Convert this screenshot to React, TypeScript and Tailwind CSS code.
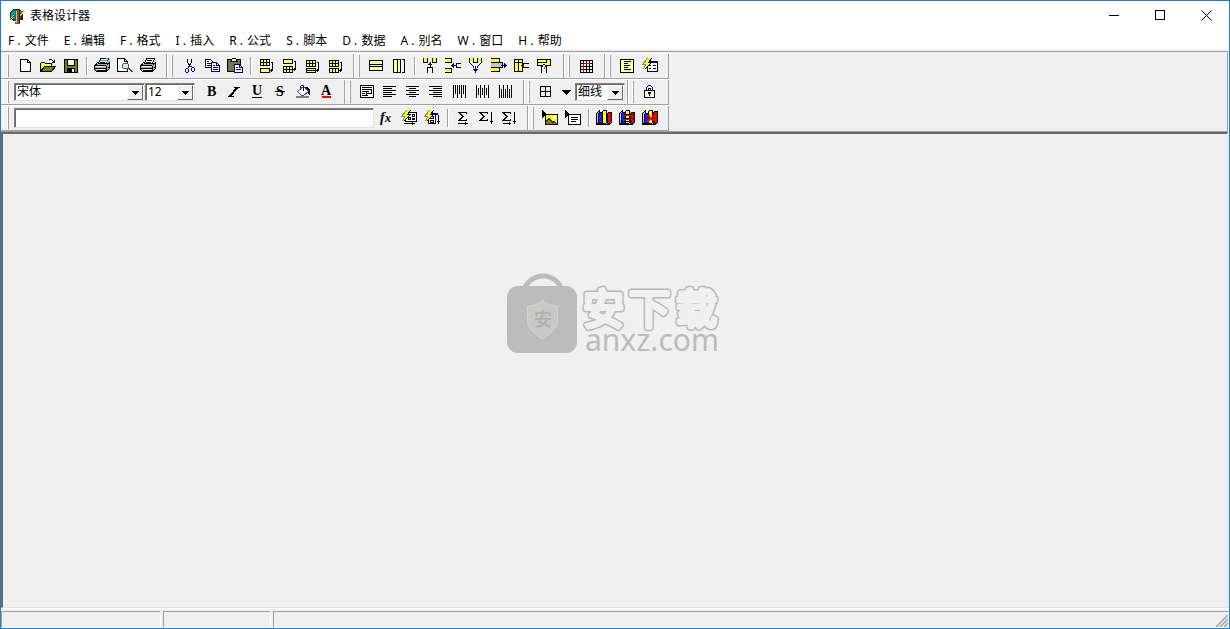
import type { ReactNode } from "react";

const YELLOW = "#ffff4c";
const PALE = "#ffff9c";
const NAVY = "#000080";

function Icon({ children }: { children: ReactNode }) {
  return (
    <svg
      viewBox="0 0 23 24"
      className="h-6 w-[23px] shrink-0"
      fill="none"
      stroke="#000"
      shapeRendering="crispEdges"
      aria-hidden="true"
    >
      {children}
    </svg>
  );
}

function Tool({ label, children }: { label: string; children: ReactNode }) {
  return (
    <button type="button" title={label} aria-label={label} className="flex h-6 w-[23px] shrink-0">
      <Icon>{children}</Icon>
    </button>
  );
}

function Sep() {
  return (
    <div className="flex h-6 w-2 shrink-0 items-center justify-center">
      <div className="h-[18px] w-0.5 border-l border-r border-l-[#a0a0a0] border-r-white" />
    </div>
  );
}

function Bar({ label, tight, children }: { label: string; tight?: boolean; children: ReactNode }) {
  return (
    <div
      role="toolbar"
      aria-label={label}
      className={
        "flex h-6 shrink-0 items-center border-r border-l border-r-[#a0a0a0] border-l-white pl-[3px] " +
        (tight ? "pr-0.5" : "pr-1.5")
      }
    >
      <div className="mr-[5px] h-[22px] w-0.5 border-l border-r border-l-white border-r-[#a0a0a0]" />
      {children}
    </div>
  );
}

function Row({ children }: { children: ReactNode }) {
  return (
    <div className="flex w-fit border-t border-b border-t-white border-b-[#a0a0a0] pl-0.5">{children}</div>
  );
}

const sunken =
  "border border-t-[#808080] border-l-[#808080] border-r-[#e3e3e3] border-b-[#e3e3e3] bg-white shadow-[inset_1px_1px_0_#696969]";

function Combo({ label, options, width }: { label: string; options: string[]; width: string }) {
  return (
    <div className={`relative h-[18px] shrink-0 ${sunken} ${width}`}>
      <select
        aria-label={label}
        className="block h-4 w-full appearance-none bg-transparent pl-0.5 text-xs leading-4 text-black outline-none"
      >
        {options.map((o) => (
          <option key={o}>{o}</option>
        ))}
      </select>
      <span className="pointer-events-none absolute top-px right-px flex h-[15px] w-4 items-center justify-center border border-t-white border-l-white border-r-[#696969] border-b-[#696969] bg-[#f0f0f0]">
        <svg viewBox="0 0 7 4" className="h-1 w-[7px]" shapeRendering="crispEdges" aria-hidden="true">
          <path d="M0 0h7v1h-7zM1 1h5v1h-5zM2 2h3v1h-3zM3 3h1v1h-1z" />
        </svg>
      </span>
    </div>
  );
}

function Printer() {
  return (
    <>
      <path d="M7.5 9.5L9.5 4.5H17.5L15.5 9.5Z" fill="#fff" />
      <path d="M10 6.5h5M9 8.5h5" />
      <path d="M3.5 11.5L6.5 8.5M15.5 9.5H18.5V14.5L15.5 17.5H5.5L3.5 15.5V11.5L6.5 9.5" fill="#a8a8a8" />
      <path d="M4 11.5H15M4 14.5H15.5M15.5 11.5V17M15.5 11.5L18.5 8.5M6 16.5h9M16.5 13.5h2" />
      <path d="M5 12.5h9M6 15.5h8" stroke="#fff" />
      <path d="M11 12.5h2" stroke="#ff0" />
    </>
  );
}

function Bolt() {
  return (
    <>
      <path d="M8 4h5l-3 4h3L5 15l2-5H4z" fill="#ff0" stroke="none" />
      <path d="M8.5 4.5L3.5 10.5H6.5L4.5 15.5" stroke="#808080" />
      <path d="M12.5 4.5L9.5 8.5H12.5L5.5 15.5" />
    </>
  );
}

function Cells({ y, rows }: { y: number; rows: number }) {
  return (
    <>
      <rect x="5.5" y={y + 0.5} width="9" height={rows === 2 ? 6 : 4} fill={YELLOW} />
      {rows === 2 && <path d={`M5 ${y + 3.5}h10`} />}
      {rows === 2 && <path d={`M8.5 ${y}v7M11.5 ${y}v7`} />}
    </>
  );
}

function RowArrow({ y }: { y: number }) {
  return <path d={`M15.5 ${y + 0.5}h2v8M15 ${y + 8.5}h3M16.5 ${y + 7}v3`} />;
}

function Sigma({ x }: { x: number }) {
  return (
    <path
      d={`M${x + 8.5} 8V6.5H${x + 0.5}L${x + 4.5} 10.5L${x + 0.5} 14.5H${x + 8.5}V13M${x + 1.5} 6.5L${x + 5.5} 10.5L${x + 1.5} 14.5`}
    />
  );
}

function ChartBase() {
  return (
    <>
      <path d="M3.5 7.5L6.5 4.5V15.5L3.5 18.5Z" fill="#c0c0c0" />
      <path d="M3 18.5H16L18.5 16" />
      <path d="M4 9.5h2M4 12.5h2" stroke="#fff" />
    </>
  );
}

function Column({ x, y, color }: { x: number; y: number; color: string }) {
  return (
    <>
      <path d={`M${x + 0.5} ${y + 1.5}l1 -1h3V16.5l-1 1h-3z`} fill={color} />
      <path d={`M${x + 0.5} ${y + 2}V17`} />
    </>
  );
}

const menus = [
  ["F", "文件"],
  ["E", "编辑"],
  ["F", "格式"],
  ["I", "插入"],
  ["R", "公式"],
  ["S", "脚本"],
  ["D", "数据"],
  ["A", "别名"],
  ["W", "窗口"],
  ["H", "帮助"],
];

function TitleBar() {
  return (
    <header className="flex h-[29px] shrink-0 items-center bg-white pl-2">
      <svg viewBox="0 0 16 16" className="h-4 w-4" shapeRendering="crispEdges" aria-hidden="true">
        <circle cx="7.5" cy="7" r="6" fill="#087c7c" stroke="#033" />
        <path d="M3 4h3v2H4v4H2V6zM10 3h3v3h-2z" fill="#0aa" />
        <path d="M0 11l3-3 2-1 1 2-3 2zM10 6l3-3 2-1-1 4-3 2z" fill="#d8d81c" />
        <path d="M1 12l3-3 2-1M10 7l4-4" stroke="#440" fill="none" />
        <path d="M6 3h5v2h-1v9h1v2H6v-2h1V5H6z" fill="#8a4b28" />
        <path d="M7 3h1v12H7z" fill="#e0bc96" />
        <path d="M10 4h1v11h-1zM12 8h2v4h-2z" fill="#301808" />
      </svg>
      <h1 className="ml-[5px] flex-1 text-xs text-black">表格设计器</h1>
      <div className="flex h-full">
        <button type="button" aria-label="最小化" className="flex w-[46px] items-center justify-center">
          <svg viewBox="0 0 11 11" className="h-[11px] w-[11px]" stroke="#000" shapeRendering="crispEdges">
            <path d="M0 5.5h10" />
          </svg>
        </button>
        <button type="button" aria-label="最大化" className="flex w-[46px] items-center justify-center">
          <svg viewBox="0 0 11 11" className="h-[11px] w-[11px]" stroke="#000" fill="none" shapeRendering="crispEdges">
            <rect x="0.5" y="0.5" width="9" height="9" />
          </svg>
        </button>
        <button type="button" aria-label="关闭" className="flex w-[46px] items-center justify-center">
          <svg viewBox="0 0 11 11" className="h-[11px] w-[11px]" stroke="#000">
            <path d="M0.5 0.5l10 10M10.5 0.5l-10 10" />
          </svg>
        </button>
      </div>
    </header>
  );
}

function StandardRow() {
  return (
    <Row>
      <Bar label="标准">
        <Tool label="新建">
          <path d="M6.5 5.5H13.5L16.5 8.5V17.5H6.5Z" fill="#fff" />
          <path d="M13.5 5.5v3h3" />
        </Tool>
        <Tool label="打开">
          <path d="M3.5 17.5V9.5L4.5 8.5H7.5L8.5 9.5H14.5V12.5" fill={YELLOW} />
          <path d="M3.5 17.5L7.5 12.5H18.5L14.5 17.5Z" fill="#808000" />
          <path d="M11.5 6.5L12.5 5.5H14.5L17.5 8.5M17.5 6v3M15 8.5h3" />
        </Tool>
        <Tool label="保存">
          <rect x="4.5" y="5.5" width="13" height="13" fill="#808000" />
          <rect x="7.5" y="5.5" width="7" height="6" fill="#f0f0f0" />
          <rect x="7" y="14" width="8" height="5" fill="#000" stroke="none" />
          <rect x="12" y="15" width="2" height="3" fill="#f0f0f0" stroke="none" />
        </Tool>
        <Sep />
        <Tool label="打印设置">
          <Printer />
          <path d="M9 6.5h7M15 4.5h2M18 5.5h1M16 7.5h3" stroke="#00c8d8" />
        </Tool>
        <Tool label="打印预览">
          <path d="M3.5 4.5H10.5L13.5 7.5V17.5H3.5Z" fill="#fff" />
          <path d="M10.5 4.5v3h3" />
          <circle cx="11.5" cy="12" r="3" fill="#c8f0f0" stroke="#555" />
          <path d="M14 14l4.5 4.5M15 14l4 4" stroke="#444" />
        </Tool>
        <Tool label="打印">
          <Printer />
        </Tool>
      </Bar>
      <Bar label="编辑">
        <Tool label="剪切">
          <path d="M9.5 5v3l3 5M13.5 5v3l-3 5M10 10.5h3M11 11.5h1" />
          <path d="M11.5 12l-1 2M12.5 12l1 1M7.5 15.5l1-1h1l1 1v2l-1 1h-1l-1-1zM13.5 14.5l1-1h1l1 1v2l-1 1h-1l-1-1z" stroke={NAVY} />
        </Tool>
        <Tool label="复制">
          <path d="M4.5 5.5h5l2 2v6h-7z" fill="#fff" />
          <path d="M6 7.5h2M6 9.5h4M6 11.5h4" />
          <path d="M10.5 8.5h5l3 3v6h-8z" fill="#fff" stroke={NAVY} />
          <path d="M12 11.5h2M12 13.5h5M12 15.5h5M15.5 8.5v3h3" stroke={NAVY} />
        </Tool>
        <Tool label="粘贴">
          <rect x="3.5" y="5.5" width="13" height="12" rx="1" fill="#77774a" />
          <path d="M6.5 7.5L8.5 4.5H11.5L13.5 7.5Z" fill="#ffff80" />
          <path d="M10.5 10.5h5l3 3v5h-8z" fill="#fff" stroke={NAVY} />
          <path d="M12 13.5h2M12 15.5h5M15.5 10.5v3h3" stroke={NAVY} />
        </Tool>
        <Sep />
        <Tool label="插入行">
          <Cells y={5} rows={2} />
          <Cells y={14} rows={1} />
          <RowArrow y={8} />
        </Tool>
        <Tool label="追加行">
          <Cells y={5} rows={1} />
          <Cells y={12} rows={2} />
          <RowArrow y={7} />
        </Tool>
        <Tool label="插入列">
          <Cells y={6} rows={2} />
          <Cells y={14} rows={1} />
          <path d="M5 16.5h10" />
          <RowArrow y={8} />
        </Tool>
        <Tool label="追加列">
          <Cells y={6} rows={2} />
          <Cells y={14} rows={1} />
          <path d="M8.5 14v4M11.5 14v4" />
          <RowArrow y={8} />
        </Tool>
      </Bar>
      <Bar label="单元格">
        <Tool label="横向拆分">
          <rect x="4.5" y="6.5" width="13" height="10" fill={PALE} />
          <path d="M4 10.5h14M4 12.5h14" />
          <path d="M5 11.5h12" stroke="#f0f0f0" />
        </Tool>
        <Tool label="纵向拆分">
          <rect x="5.5" y="5.5" width="7" height="13" fill={PALE} />
          <path d="M9.5 5v14M14 5.5h2.5v13H14" />
        </Tool>
        <Sep />
        <Tool label="向上合并">
          <path d="M4 4h4v4H4zM14 4h4v4h-4z" fill="#ff0" stroke="none" />
          <path d="M4.5 4v4.5h4V4M13.5 4v4.5h4V4M8.5 19v-5.5h5V19" />
          <path d="M11 8v5M9 10.5h4M10 9.5h2" stroke={NAVY} />
        </Tool>
        <Tool label="向左合并">
          <path d="M3 5h6v3H3zM3 15h6v3H3z" fill="#ff0" stroke="none" />
          <path d="M3 4.5h6.5v4H3M3 14.5h6.5v4H3M19 9.5h-4.5v4h4.5" />
          <path d="M9 11.5h5M11.5 9v5M10.5 10v3" stroke={NAVY} />
        </Tool>
        <Tool label="向下合并">
          <path d="M4 4h4v4H4zM13 4h4v4h-4z" fill="#ff0" stroke="none" />
          <path d="M4.5 4v4.5l4 4v1.5M8.5 4v4.5h4V4M16.5 4v4.5l-4 4v1.5" />
          <path d="M10.5 12v7M8 15.5h5M9 16.5h3" stroke={NAVY} />
        </Tool>
        <Tool label="向右合并">
          <path d="M3 5h8v3H3zM3 14h8v3H3z" fill="#ff0" stroke="none" />
          <path d="M3 9h11v4H3z" fill="#c4c4c4" stroke="none" />
          <path d="M3 4.5h8.5v4H3M3 8.5h11.5v5H3M3 17.5h8.5v-4" />
          <path d="M13 11.5h6M16.5 9v5M17.5 10v3" stroke={NAVY} />
        </Tool>
        <Tool label="删除列">
          <rect x="3.5" y="5.5" width="8" height="12" fill={YELLOW} />
          <path d="M3 8.5h9M7.5 5v13" />
          <path d="M18 9.5h-5l-2 2 2 2h5" fill="#f0f0f0" />
          <path d="M12 11.5h1" stroke="#e02020" />
        </Tool>
        <Tool label="删除行">
          <rect x="3.5" y="5.5" width="13" height="6" fill={YELLOW} />
          <path d="M3 8.5h9.5V5" />
          <path d="M7.5 19v-6l2.5-3 2.5 3v6" fill="#f0f0f0" />
          <path d="M10.5 13v2" stroke="#e02020" />
        </Tool>
      </Bar>
      <Bar label="表格">
        <Tool label="表格线">
          <path d="M5.5 6.5h12v12h-12zM5 9.5h13M5 12.5h13M5 15.5h13M8.5 6v13M11.5 6v13M14.5 6v13" />
          <path d="M8.5 18V9.5H16" stroke="#e00000" />
        </Tool>
      </Bar>
      <Bar label="属性">
        <Tool label="表格属性">
          <rect x="4.5" y="5.5" width="13" height="13" fill={PALE} />
          <path d="M8 7.5h7M8 9.5h4M8 11.5h6M8 13.5h4M8 15.5h7" />
        </Tool>
        <Tool label="快速属性">
          <rect x="8.5" y="7.5" width="10" height="10" fill="#fff" />
          <path d="M9 7.5h10" stroke={NAVY} strokeWidth="2" />
          <path d="M10 11.5h2M14 11.5h3M10 14.5h2M14 14.5h3" stroke={NAVY} />
          <Bolt />
        </Tool>
      </Bar>
    </Row>
  );
}

function linesH(kind: "left" | "center" | "right") {
  if (kind === "left") return "M4 6.5h13M4 8.5h9M4 10.5h13M4 12.5h9M4 14.5h13M4 16.5h9";
  if (kind === "center") return "M4 6.5h13M7 8.5h7M4 10.5h13M7 12.5h7M4 14.5h13M7 16.5h7";
  return "M4 6.5h13M8 8.5h9M4 10.5h13M8 12.5h9M4 14.5h13M8 16.5h9";
}

function linesV(kind: "top" | "middle" | "bottom") {
  if (kind === "top") return "M5.5 5v13M7.5 5v9M9.5 5v13M11.5 5v9M13.5 5v13M15.5 5v9M17.5 5v13";
  if (kind === "middle") return "M5.5 5v13M7.5 8v7M9.5 5v13M11.5 8v7M13.5 5v13M15.5 8v7M17.5 5v13";
  return "M5.5 5v13M7.5 9v9M9.5 5v13M11.5 9v9M13.5 5v13M15.5 9v9M17.5 5v13";
}

const glyph = "fill-black stroke-none font-['Liberation_Serif',serif] font-bold text-[14px]";

function FormatRow() {
  return (
    <Row>
      <Bar label="字体">
        <Combo label="字体" options={["宋体", "黑体", "楷体"]} width="w-[131px]" />
        <Combo label="字号" options={["12", "14", "16"]} width="w-[50px]" />
        <div className="flex pl-[5px]">
          <Tool label="加粗">
            <text x="7" y="16" className={glyph}>B</text>
          </Tool>
          <Tool label="倾斜">
            <path d="M11 7.5h6M5 16.5h6" />
            <path d="M7 16L14 8" strokeWidth="2" />
          </Tool>
          <Tool label="下划线">
            <text x="6" y="15" className={glyph}>U</text>
            <path d="M6 17.5h10" />
          </Tool>
          <Tool label="删除线">
            <text x="7" y="16" className={glyph}>S</text>
            <path d="M6 11.5h10" />
          </Tool>
          <Tool label="填充颜色">
            <path d="M5.5 11.5L11.5 6.5L16.5 11.5L11.5 15.5H9.5Z" fill="#fff" stroke="#555" />
            <path d="M8.5 8V6.5L9.5 5.5H11.5V11" stroke={NAVY} />
            <path d="M12 7h3l3 3v6l-2-2v-3z" fill={NAVY} stroke="none" />
            <rect x="4" y="16" width="13" height="2" fill="#808080" stroke="none" />
          </Tool>
          <Tool label="字体颜色">
            <text x="6" y="15" className={glyph}>A</text>
            <rect x="7" y="16" width="9" height="2" fill="#f00" stroke="none" />
          </Tool>
        </div>
      </Bar>
      <Bar label="对齐">
        <Tool label="自动换行">
          <rect x="4.5" y="5.5" width="13" height="12" fill="#fff" />
          <path d="M6 7.5h10M6 9.5h9.5v4H11M6 11.5h7M6 13.5h3M6 15.5h6M10.5 12v3" />
        </Tool>
        <Tool label="左对齐"><path d={linesH("left")} /></Tool>
        <Tool label="水平居中"><path d={linesH("center")} /></Tool>
        <Tool label="右对齐"><path d={linesH("right")} /></Tool>
        <Tool label="顶端对齐"><path d={linesV("top")} /></Tool>
        <Tool label="垂直居中"><path d={linesV("middle")} /></Tool>
        <Tool label="底端对齐"><path d={linesV("bottom")} /></Tool>
      </Bar>
      <Bar label="边框" tight>
        <Tool label="边框">
          <path d="M5.5 6.5h10v10h-10zM5 11.5h11M10.5 6v11" />
        </Tool>
        <button type="button" aria-label="边框选项" className="flex h-6 w-[17px] items-center justify-center">
          <svg viewBox="0 0 9 5" className="h-[5px] w-[9px]" shapeRendering="crispEdges" aria-hidden="true">
            <path d="M0 0h9v1h-9zM1 1h7v1h-7zM2 2h5v1h-5zM3 3h3v1h-3zM4 4h1v1h-1z" />
          </svg>
        </button>
        <Combo label="线型" options={["细线", "粗线"]} width="w-[50px]" />
      </Bar>
      <Bar label="保护">
        <Tool label="锁定">
          <path d="M7.5 11V7.5L9.5 5.5H11.5L13.5 7.5V11M9.5 11V8.5h2V11" stroke={NAVY} />
          <rect x="5.5" y="10.5" width="10" height="7" fill={PALE} stroke={NAVY} />
          <path d="M9 12h3v2h-1v2h-1v-2H9z" fill={NAVY} stroke="none" />
        </Tool>
      </Bar>
    </Row>
  );
}

function FormulaRow() {
  return (
    <Row>
      <Bar label="公式">
        <input type="text" aria-label="公式" className={`mr-px h-5 w-[360px] px-1 text-xs outline-none ${sunken}`} />
        <Tool label="函数">
          <text x="5" y="16" className="fill-black stroke-none font-['Liberation_Serif',serif] text-[14px] font-bold italic">f</text>
          <text x="10" y="16" className="fill-black stroke-none font-['Liberation_Serif',serif] text-[12px] font-bold italic">x</text>
        </Tool>
        <Tool label="行公式">
          <rect x="7.5" y="6.5" width="11" height="9" fill="#fff" />
          <path d="M10.5 11.5h2v2h-2zM14.5 8.5h2v2h-2zM14.5 12.5h2v1h-2zM6 17.5h11M14.5 16v3" />
          <Bolt />
        </Tool>
        <Tool label="列公式">
          <path d="M7.5 17.5V7.5h7v10z" fill="#fff" />
          <path d="M8 7.5h9" stroke={NAVY} strokeWidth="2" />
          <path d="M9.5 10.5h3v2h-3zM9.5 14.5h3v2h-3zM17.5 9v9M16 15.5h3" />
          <Bolt />
        </Tool>
        <Sep />
        <Tool label="行求和">
          <Sigma x={6} />
          <path d="M6 17.5h10M13.5 16v3" />
        </Tool>
        <Tool label="列求和">
          <Sigma x={4} />
          <path d="M16.5 6v12M15 15.5h3" />
        </Tool>
        <Tool label="行列求和">
          <Sigma x={4} />
          <path d="M16.5 6v12M15 15.5h3M5 17.5h8M11.5 16v3" />
        </Tool>
      </Bar>
      <Bar label="对象">
        <Tool label="插入图片">
          <path d="M3 4l5 4-5 4z" fill="#000" stroke="none" />
          <rect x="6.5" y="8.5" width="12" height="10" fill="#ff0" />
          <path d="M7 18v-2l3-3 3 3 2-1 3 2v1z" fill="#808000" stroke="none" />
          <path d="M14 10.5h3M14 12.5h3M15.5 10v3" stroke="#fff" />
          <path d="M7 15.5l3-3 4 4 1-1 3 2" stroke="#333" />
        </Tool>
        <Tool label="插入文本">
          <path d="M3 4l5 4-5 4z" fill="#000" stroke="none" />
          <rect x="6.5" y="8.5" width="12" height="10" fill="#fff" />
          <path d="M9 11.5h7M9 13.5h7M9 15.5h5" />
        </Tool>
        <Sep />
        <Tool label="柱形图">
          <ChartBase />
          <Column x={5} y={6} color="#1020ff" />
          <Column x={9} y={4} color="#ff0" />
          <Column x={14} y={6} color="#f00000" />
        </Tool>
        <Tool label="条形图">
          <ChartBase />
          <Column x={5} y={6} color="#1020ff" />
          <Column x={9} y={4} color="#ff0" />
          <Column x={14} y={6} color="#f00000" />
          <path d="M8 8.5h10M8 12.5h10M8 15.5h8" />
          <path d="M9 9.5h8M9 13.5h6" stroke="#f00000" />
        </Tool>
        <Tool label="折线图">
          <ChartBase />
          <Column x={5} y={7} color="#1020ff" />
          <Column x={9} y={4} color="#ff0" />
          <Column x={14} y={5} color="#f00000" />
          <path d="M9 9l3 4 4-5M8 16l4-4 4 3" stroke="#f00000" strokeWidth="2" />
        </Tool>
      </Bar>
    </Row>
  );
}

function Watermark() {
  return (
    <svg viewBox="0 0 216 96" className="h-24 w-[216px] shrink-0" role="img" aria-label="安下载 anxz.com">
      <path d="M17 19a19.5 19.5 0 0 1 38 0" fill="none" stroke="#bcbcbc" strokeWidth="5" />
      <rect x="0" y="14" width="70" height="67" rx="11" fill="#bcbcbc" />
      <path d="M35.5 28.5c5 4 10 5.5 15 5.5v14c0 9-8 14.5-15 19c-7-4.5-15-10-15-19V34c5 0 10-1.5 15-5.5z" fill="#c8c8c6" stroke="#d4d4d2" />
      <text x="36" y="54" textAnchor="middle" className="fill-[#b2b2b2] text-[18px] font-bold">安</text>
      <g stroke="#b9b9b9" strokeWidth="7" fill="#b9b9b9" strokeLinejoin="round">
        <text id="brand" x="76 122 169" y="52" className="text-[41px]">安下载</text>
      </g>
      <use href="#brand" stroke="#f0f0f0" fill="#f0f0f0" strokeWidth="4" strokeLinejoin="round" />
      <text x="78" y="79" className="fill-[#bcbcbc] font-['Noto_Sans',sans-serif] text-[30px]">anxz.com</text>
    </svg>
  );
}

const panel = "border border-t-[#a0a0a0] border-l-[#a0a0a0] border-r-white border-b-white";

export default function App() {
  return (
    <div className="flex h-screen flex-col overflow-hidden border border-[#1a82d6] bg-[#f0f0f0] font-['Noto_Sans','Noto_Sans_CJK_SC',sans-serif] text-black">
      <TitleBar />
      <nav aria-label="主菜单" className="flex h-[19px] shrink-0 items-center gap-[15px] bg-white pt-[3px] pl-[7px]">
        {menus.map(([key, name]) => (
          <button key={name} type="button" className="flex items-center text-xs leading-4 whitespace-pre">
            <span>{key} .</span>
            <span className="pl-px">{" "}{name}</span>
          </button>
        ))}
      </nav>
      <div className="mt-0.5 mr-px shrink-0 border-t border-r border-b border-[#a0a0a0] pt-px">
        <div className="flex flex-col">
          <StandardRow />
          <FormatRow />
          <FormulaRow />
        </div>
      </div>
      <main className="mr-px flex min-h-0 flex-1 justify-center border-t-2 border-r border-b border-l-2 border-t-[#696969] border-r-[#e3e3e3] border-b-[#e3e3e3] border-l-[#696969] pt-[138px]">
        <Watermark />
      </main>
      <footer className="flex h-5 shrink-0 gap-0.5 border-t border-t-white pt-0.5">
        <div className={`w-40 ${panel}`} />
        <div className={`w-[108px] ${panel}`} />
        <div className={`flex flex-1 items-end justify-end ${panel}`}>
          <svg viewBox="0 0 12 12" className="h-3 w-3" stroke="#a0a0a0" strokeWidth="1.5" aria-hidden="true">
            <path d="M0 12L12 0M4 12L12 4M8 12L12 8" />
          </svg>
        </div>
      </footer>
    </div>
  );
}
